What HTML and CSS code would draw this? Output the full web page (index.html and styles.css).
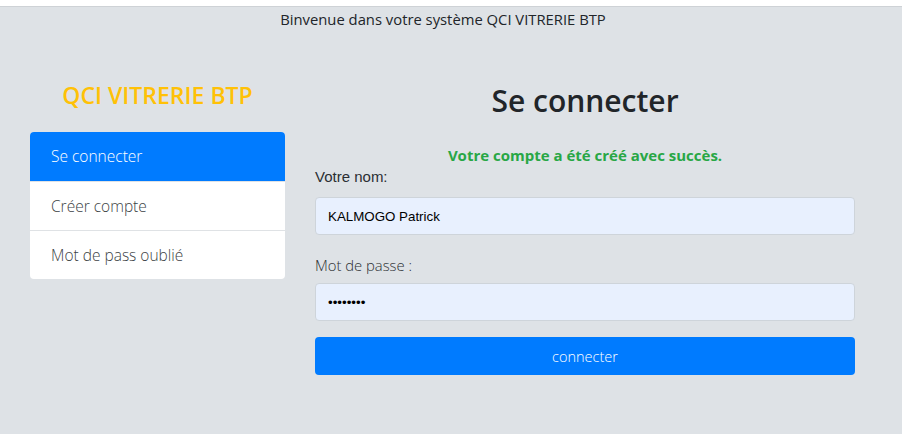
FILE: index.html
```html
<!DOCTYPE html>
<html lang="fr">
<head>
<meta charset="utf-8">
<title>QCI VITRERIE BTP</title>
<link rel="stylesheet" href="styles.css">
</head>
<body>
<div class="topstrip"></div>
<div class="page">
  <p class="welcome">Binvenue dans votre système QCI VITRERIE BTP</p>
  <div class="layout">
    <aside class="sidebar">
      <h2 class="brand">QCI VITRERIE BTP</h2>
      <ul class="menu">
        <li class="menu-item active">Se connecter</li>
        <li class="menu-item">Créer compte</li>
        <li class="menu-item">Mot de pass oublié</li>
      </ul>
    </aside>
    <main class="main">
      <h1 class="title">Se connecter</h1>
      <p class="success">Votre compte a été créé avec succès.</p>
      <form class="form">
        <label class="label label-arial" for="nom">Votre nom:</label>
        <input class="field" id="nom" type="text" value="KALMOGO Patrick">
        <label class="label label-pass" for="pass">Mot de passe :</label>
        <input class="field" id="pass" type="password" value="patrick1">
        <button class="btn" type="button">connecter</button>
      </form>
    </main>
  </div>
</div>
</body>
</html>
```
FILE: styles.css
```css
html, body {
  margin: 0;
  padding: 0;
}
body {
  background: #ffffff;
  font-family: "Open Sans", "Noto Sans", sans-serif;
  color: #212529;
}
.topstrip {
  height: 6px;
  background: #ffffff;
  border-bottom: 1px solid #ced2d6;
}
.page {
  background: #dee2e6;
  height: 427px;
  overflow: hidden;
}
.welcome {
  margin: 0;
  padding-top: 2px;
  padding-right: 16px;
  height: 20px;
  line-height: 20px;
  font-size: 14.8px;
  text-align: center;
  color: #212529;
  font-weight: 400;
}
.layout {
  display: flex;
  gap: 30px;
  padding-left: 30px;
}
.sidebar {
  width: 255px;
  display: flex;
  flex-direction: column;
}
.brand {
  margin: 52px 0 23px;
  font-size: 23px;
  line-height: 28px;
  font-weight: 600;
  color: #ffc107;
  text-align: center;
}
.menu {
  list-style: none;
  margin: 0;
  padding: 0;
  background: #ffffff;
  border-radius: 4px;
  overflow: hidden;
}
.menu-item {
  height: 48px;
  line-height: 48px;
  padding-left: 21px;
  font-size: 15.5px;
  color: #3b3f44;
  font-weight: 300;
  border-top: 1px solid #dfe2e5;
}
.menu-item:first-child {
  border-top: none;
  height: 49px;
}
.menu-item.active {
  background: #007bff;
  color: #ffffff;
}
.main {
  width: 540px;
  display: flex;
  flex-direction: column;
}
.title {
  margin: 53px 0 0;
  font-size: 30px;
  line-height: 38px;
  font-weight: 600;
  text-align: center;
  color: #212529;
}
.success {
  margin: 25px 0 0;
  font-size: 15px;
  line-height: 20px;
  font-weight: 700;
  text-align: center;
  color: #28a745;
}
.form {
  display: flex;
  flex-direction: column;
}
.label {
  display: block;
  font-size: 15px;
  line-height: 20px;
  color: #2b2f33;
}
.label-arial {
  margin-top: 2px;
  font-family: "Liberation Sans", Arial, sans-serif;
}
.label-pass {
  margin-top: 20px;
  font-weight: 300;
  font-size: 14.8px;
}
.field {
  box-sizing: border-box;
  height: 38px;
  margin-top: 10px;
  padding: 0 12px;
  border: 1px solid #ced4da;
  border-radius: 4px;
  background: #e8f0fe;
  font-family: "Liberation Sans", Arial, sans-serif;
  font-size: 13.33px;
  color: #000000;
}
#pass {
  margin-top: 8px;
}
.btn {
  height: 38px;
  margin-top: 16px;
  border: none;
  border-radius: 4px;
  background: #007bff;
  color: #ffffff;
  font-family: "Open Sans", "Noto Sans", sans-serif;
  font-size: 14.5px;
  font-weight: 300;
}
```
